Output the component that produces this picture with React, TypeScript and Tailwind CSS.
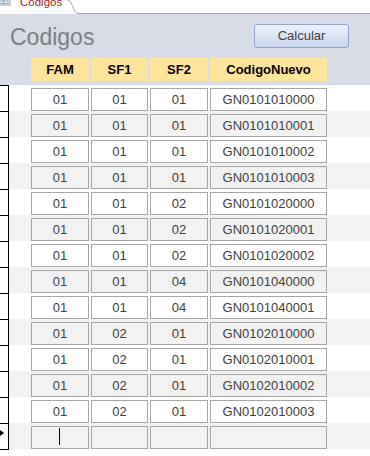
const rows = [
  ["01", "01", "01", "GN0101010000"],
  ["01", "01", "01", "GN0101010001"],
  ["01", "01", "01", "GN0101010002"],
  ["01", "01", "01", "GN0101010003"],
  ["01", "01", "02", "GN0101020000"],
  ["01", "01", "02", "GN0101020001"],
  ["01", "01", "02", "GN0101020002"],
  ["01", "01", "04", "GN0101040000"],
  ["01", "01", "04", "GN0101040001"],
  ["01", "02", "01", "GN0102010000"],
  ["01", "02", "01", "GN0102010001"],
  ["01", "02", "01", "GN0102010002"],
  ["01", "02", "01", "GN0102010003"],
];

function Cell({ value, className }: { value: string; className: string }) {
  return (
    <div
      className={`h-[23px] border border-[#a6a6a6] flex items-center justify-center text-[13px] text-[#404040] ${className}`}
    >
      {value}
    </div>
  );
}

export default function App() {
  return (
    <div className="w-[370px] h-[456px] bg-white overflow-hidden font-['Liberation_Sans',Arial,sans-serif]">
      {/* Tab strip */}
      <div className="relative h-[14px] bg-white overflow-hidden">
        <svg className="absolute left-0 top-0" width="370" height="14">
          <path
            d="M67 0 C70 0 71.5 3 73 7 C74.5 11 75.5 13.5 79 13.5 L370 13.5"
            fill="none"
            stroke="#a3a3a3"
            strokeWidth="1"
          />
          <rect x="0" y="-3" width="10" height="8" fill="#dfe6ef" stroke="#8c97a8" strokeWidth="0.8" />
          <line x1="2" y1="1" x2="5" y2="1" stroke="#7d8899" strokeWidth="1" />
          <line x1="2" y1="3.5" x2="5" y2="3.5" stroke="#7d8899" strokeWidth="1" />
          <line x1="6" y1="1" x2="8.5" y2="1" stroke="#a0aabb" strokeWidth="1" />
          <line x1="6" y1="3.5" x2="8.5" y2="3.5" stroke="#a0aabb" strokeWidth="1" />
        </svg>
        <span className="absolute left-[20px] top-[-3px] text-[11.5px] leading-none text-[#b0232a]">
          Codigos
        </span>
      </div>

      {/* Form header */}
      <div className="h-[71px] bg-[#d7dce7] flex flex-col">
        <div className="h-[44px] flex items-start">
          <div className="ml-[10px] mt-[12px] text-[23px] leading-none h-[23px] text-[#7f7f7f]">
            Codigos
          </div>
          <button className="ml-auto mr-[21px] mt-[10px] w-[95px] h-[24px] rounded-[3px] border border-[#8ea3cc] bg-gradient-to-b from-[#eef2fb] to-[#c9d6ef] text-[13px] text-[#404040] flex items-center justify-center">
            Calcular
          </button>
        </div>
        <div className="h-[23px] flex text-[13px] font-bold text-black">
          <div className="ml-[31px] w-[58px] bg-[#fee59b] flex items-center justify-center">FAM</div>
          <div className="ml-[2px] w-[57px] bg-[#fee59b] flex items-center justify-center">SF1</div>
          <div className="ml-[2px] w-[58px] bg-[#fee59b] flex items-center justify-center">SF2</div>
          <div className="ml-[2px] w-[117px] bg-[#fee59b] flex items-center justify-center">CodigoNuevo</div>
        </div>
      </div>

      {/* Detail rows */}
      {rows.map((r, i) => (
        <div key={i} className="h-[26px] flex">
          <div className="w-[9px] bg-white border-t border-r border-black" />
          <div className={`flex-1 flex pt-[3px] ${i % 2 === 1 ? "bg-[#f2f2f2]" : "bg-white"}`}>
            <Cell value={r[0]} className="ml-[22px] w-[58px]" />
            <Cell value={r[1]} className="ml-[2px] w-[57px]" />
            <Cell value={r[2]} className="ml-[2px] w-[58px]" />
            <Cell value={r[3]} className="ml-[2px] w-[117px]" />
          </div>
        </div>
      ))}

      {/* New record row */}
      <div className="h-[26px] flex">
        <div className="w-[9px] bg-white border-t border-r border-black relative">
          <div className="absolute left-0 top-[6px] w-0 h-0 border-y-[3.5px] border-y-transparent border-l-[4px] border-l-black" />
        </div>
        <div className="flex-1 flex pt-[3px] bg-[#f2f2f2]">
          <div className="ml-[22px] w-[58px] h-[23px] border border-[#a6a6a6] relative">
            <div className="absolute left-[27px] top-[1px] w-px h-[17px] bg-black" />
          </div>
          <Cell value="" className="ml-[2px] w-[57px]" />
          <Cell value="" className="ml-[2px] w-[58px]" />
          <Cell value="" className="ml-[2px] w-[117px]" />
        </div>
      </div>
      <div className="w-[9px] h-px bg-black" />
    </div>
  );
}
